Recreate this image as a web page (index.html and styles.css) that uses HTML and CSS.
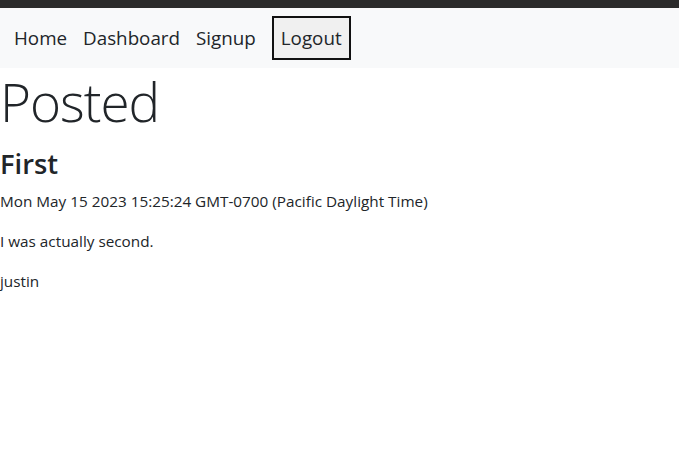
FILE: index.html
```html
<!DOCTYPE html>
<html lang="en">
<head>
<meta charset="utf-8">
<title>Posted</title>
<link rel="stylesheet" href="styles.css">
</head>
<body>
<div class="topbar"></div>
<nav class="navbar">
  <a class="nav-link" href="#">Home</a>
  <a class="nav-link" href="#">Dashboard</a>
  <a class="nav-link" href="#">Signup</a>
  <button class="logout" type="button">Logout</button>
</nav>
<main class="content">
  <h1 class="display">Posted</h1>
  <h2 class="post-title">First</h2>
  <p>Mon May 15 2023 15:25:24 GMT-0700 (Pacific Daylight Time)</p>
  <p>I was actually second.</p>
  <p>justin</p>
</main>
</body>
</html>
```

FILE: styles.css
```css
* { box-sizing: border-box; }
body {
  margin: 0;
  font-family: "Open Sans", "Noto Sans", sans-serif;
  font-size: 15.3px;
  line-height: 24px;
  color: #212529;
  background: #fff;
}
.topbar {
  height: 8px;
  background: #2b2b2b;
}
.navbar {
  display: flex;
  align-items: center;
  gap: 16px;
  background: #f8f9fa;
  padding: 8px 14px;
  height: 60px;
}
.nav-link {
  font-size: 18.8px;
  color: #212529;
  text-decoration: none;
}
.logout {
  font-family: inherit;
  font-size: 18.8px;
  color: #212529;
  background: #f0f0f0;
  border: 2px solid #111;
  padding: 0 7px;
  height: 44px;
  border-radius: 0;
}
.content {
  padding: 0;
}
.display {
  font-size: 53px;
  font-weight: 300;
  letter-spacing: -1px;
  line-height: 68px;
  margin: 0 0 12px;
}
.post-title {
  font-size: 27.3px;
  font-weight: 600;
  line-height: 1.2;
  margin: 0 0 8px;
}
p {
  margin: 0 0 16px;
}
```
